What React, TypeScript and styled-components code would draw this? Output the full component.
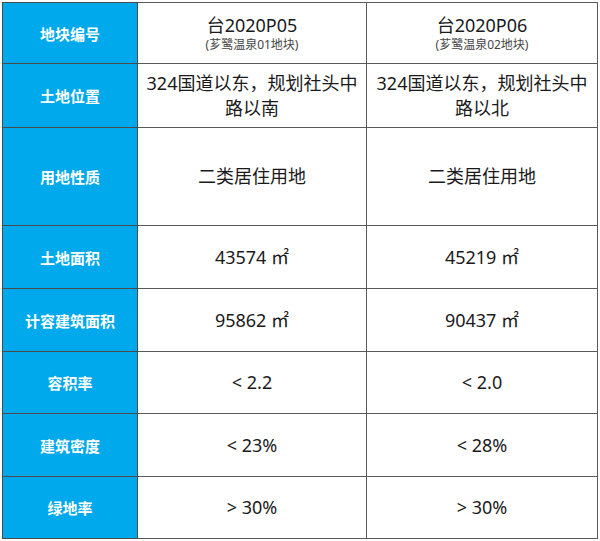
import React from "react";
import styled, { createGlobalStyle } from "styled-components";

const GlobalStyle = createGlobalStyle`
    body {
        margin: 0;
        background: #fff;
        font-family: "Noto Sans", "Noto Sans CJK SC", sans-serif;
    }
`;

const Wrap = styled.div`
    padding: 2px 0 0 2px;
`;

const Table = styled.table`
    width: 596px;
    table-layout: fixed;
    border-collapse: collapse;
    border: 1.5px solid #4a4a4a;
`;

const Label = styled.td`
    background: #00a8ec;
    color: #fff;
    font-family: "Noto Sans CJK SC", sans-serif;
    font-weight: bold;
    font-size: 15px;
    text-align: center;
    vertical-align: middle;
    border: 1px solid #4a4a4a;
    padding: 0;
`;

const Value = styled.td`
    background: #fff;
    color: #1a1a1a;
    font-size: 18px;
    line-height: 25px;
    text-align: center;
    vertical-align: middle;
    border: 1px solid #5a5a5a;
    padding: 0 8px;
`;

const Main = styled.div`
    font-size: 18px;
    line-height: 24px;
`;

const Sub = styled.div`
    font-size: 12px;
    line-height: 16px;
    color: #444;
`;

type Row = {
    label: string;
    height: number;
    values: React.ReactNode[];
};

const rows: Row[] = [
    {
        label: "地块编号",
        height: 61,
        values: [
            <><Main>台2020P05</Main><Sub>(芗鹭温泉01地块)</Sub></>,
            <><Main>台2020P06</Main><Sub>(芗鹭温泉02地块)</Sub></>,
        ],
    },
    {
        label: "土地位置",
        height: 64,
        values: ["324国道以东，规划社头中路以南", "324国道以东，规划社头中路以北"],
    },
    { label: "用地性质", height: 98, values: ["二类居住用地", "二类居住用地"] },
    { label: "土地面积", height: 63, values: ["43574 ㎡", "45219 ㎡"] },
    { label: "计容建筑面积", height: 63, values: ["95862 ㎡", "90437 ㎡"] },
    { label: "容积率", height: 62, values: ["< 2.2", "< 2.0"] },
    { label: "建筑密度", height: 63, values: ["< 23%", "< 28%"] },
    { label: "绿地率", height: 62, values: ["> 30%", "> 30%"] },
];

export default function App() {
    return (
        <>
            <GlobalStyle />
            <Wrap>
                <Table>
                    <colgroup>
                        <col style={{ width: 135 }} />
                        <col style={{ width: 229 }} />
                        <col style={{ width: 231 }} />
                    </colgroup>
                    <tbody>
                        {rows.map((r) => (
                            <tr key={r.label} style={{ height: r.height }}>
                                <Label>{r.label}</Label>
                                {r.values.map((v, i) => (
                                    <Value key={i}>{v}</Value>
                                ))}
                            </tr>
                        ))}
                    </tbody>
                </Table>
            </Wrap>
        </>
    );
}
